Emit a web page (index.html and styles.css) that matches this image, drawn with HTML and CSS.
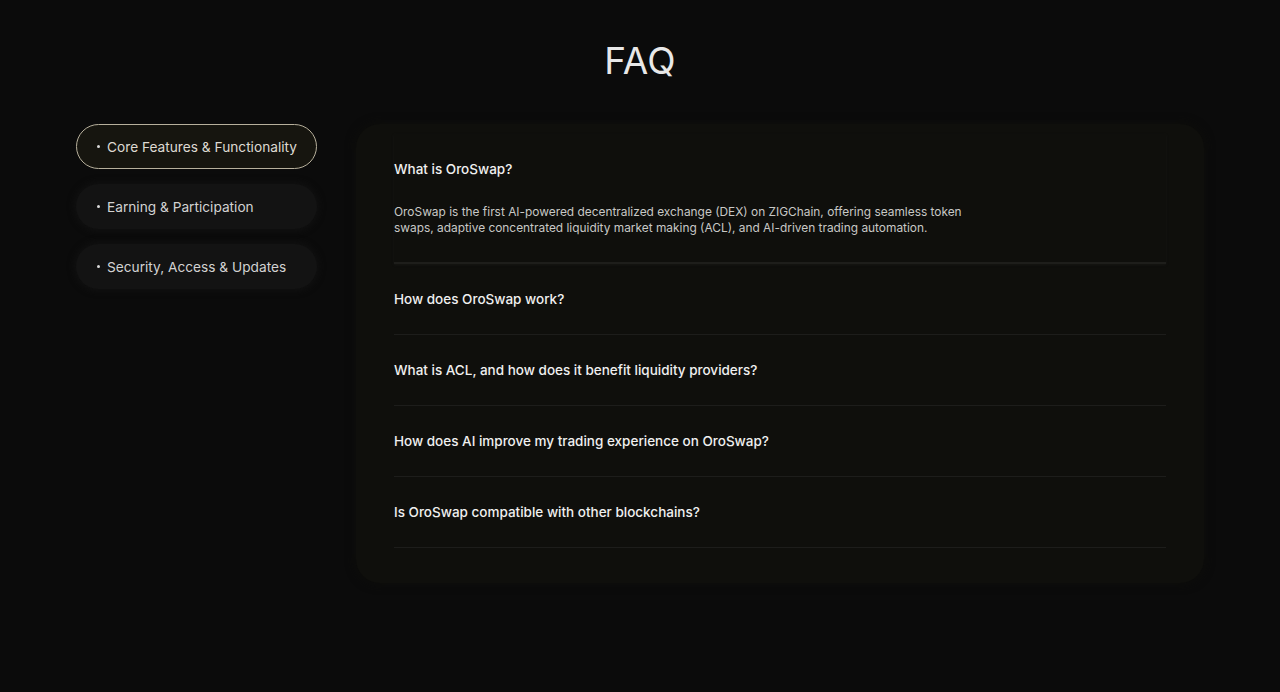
FILE: index.html
```html
<!DOCTYPE html>
<html lang="en">
<head>
<meta charset="utf-8">
<title>FAQ</title>
<link rel="stylesheet" href="styles.css">
</head>
<body>
<main class="faq">
  <h1 class="faq-title">FAQ</h1>
  <div class="faq-body">
    <nav class="cats">
      <button class="cat active"><span class="dot"></span>Core Features &amp; Functionality</button>
      <button class="cat"><span class="dot"></span>Earning &amp; Participation</button>
      <button class="cat"><span class="dot"></span>Security, Access &amp; Updates</button>
    </nav>
    <section class="card">
      <div class="item open">
        <h3 class="q">What is OroSwap?</h3>
        <p class="a">OroSwap is the first AI-powered decentralized exchange (DEX) on ZIGChain, offering seamless token swaps, adaptive concentrated liquidity market making (ACL), and AI-driven trading automation.</p>
      </div>
      <div class="item"><h3 class="q">How does OroSwap work?</h3></div>
      <div class="item"><h3 class="q">What is ACL, and how does it benefit liquidity providers?</h3></div>
      <div class="item"><h3 class="q">How does AI improve my trading experience on OroSwap?</h3></div>
      <div class="item"><h3 class="q">Is OroSwap compatible with other blockchains?</h3></div>
    </section>
  </div>
</main>
</body>
</html>
```

FILE: styles.css
```css
* { box-sizing: border-box; }
html, body { margin: 0; padding: 0; }
body {
  background: #0b0b0b;
  color: #e6e6e6;
  font-family: Inter, "Liberation Sans", Arial, sans-serif;
  height: 692px;
  overflow: hidden;
}
.faq {
  padding-top: 38px;
}
.faq-title {
  margin: 0;
  text-align: center;
  font-size: 37px;
  font-weight: 400;
  line-height: 46px;
  color: #e8e8e8;
  letter-spacing: 0.2px;
}
.faq-body {
  display: flex;
  gap: 39px;
  padding: 40px 0 0 76px;
}
.cats {
  display: flex;
  flex-direction: column;
  gap: 15px;
  width: 241px;
  flex: none;
}
.cat {
  display: flex;
  align-items: center;
  height: 45px;
  padding: 0 0 0 20px;
  border-radius: 23px;
  border: 1px solid transparent;
  background: #131313;
  box-shadow: 0 0 6px 2px #111;
  color: #d2d2d2;
  font-family: inherit;
  font-size: 13.7px;
  font-weight: 400;
  text-align: left;
  cursor: pointer;
}
.cat.active {
  background: #16150f;
  border-color: #b7b09c;
  box-shadow: none;
  color: #dedad2;
}
.dot {
  width: 3px;
  height: 3px;
  border-radius: 50%;
  background: #d8d8d8;
  margin-right: 7px;
  flex: none;
}
.card {
  width: 848px;
  flex: none;
  background: #0f0f0c;
  border-radius: 24px;
  padding: 10px 38px 35px 38px;
  box-shadow: 0 0 8px 2px #0d0d0b;
}
.item {
  padding: 25px 0;
  border-bottom: 1px solid #1d1d1b;
}
.item.open {
  padding-bottom: 26px;
  border-bottom: 2px solid #1e1e1b;
  box-shadow: 0 1px 2px #161614;
}
.q {
  margin: 0;
  font-size: 13.5px;
  font-weight: 500;
  line-height: 20px;
  color: #f0f0f0;
}
.a {
  margin: 25px 0 0;
  max-width: 590px;
  font-size: 11.9px;
  line-height: 16px;
  color: #c8c8c6;
}
```
